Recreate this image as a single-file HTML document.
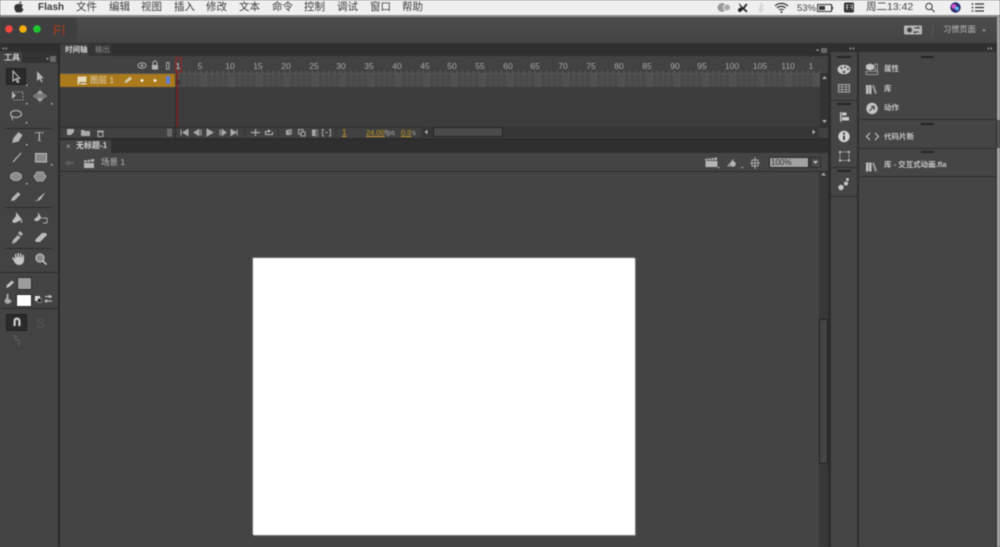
<!DOCTYPE html>
<html lang="zh"><head><meta charset="utf-8"><title>Flash</title>
<style>
html,body{margin:0;padding:0;width:1000px;height:547px;overflow:hidden;background:#454545}
body{position:relative;font-family:"Liberation Sans","Noto Sans CJK SC",sans-serif;filter:blur(.45px)}
.b{position:absolute}
.t{position:absolute;white-space:nowrap;line-height:1}
.m{top:2px;font-size:10.5px;color:#3c3c3c;line-height:11px}
.n{top:62px;font-size:8.5px;color:#a8a8a8;transform:translateX(-50%)}
svg{position:absolute;left:0;top:0}
</style></head><body>
<!-- menu bar -->
<div class="b" style="left:0;top:0;width:1000px;height:15px;background:#efefef"></div>
<div class="b" style="left:0;top:15px;width:1000px;height:2px;background:#8e8e8e"></div>
<div class="t m" style="left:38px;font-weight:700;color:#3a3a3a;font-size:10px">Flash</div>
<div class="t m" style="left:76px">文件</div><div class="t m" style="left:109px">编辑</div><div class="t m" style="left:141px">视图</div><div class="t m" style="left:174px">插入</div><div class="t m" style="left:206px">修改</div><div class="t m" style="left:239px">文本</div><div class="t m" style="left:272px">命令</div><div class="t m" style="left:304px">控制</div><div class="t m" style="left:337px">调试</div><div class="t m" style="left:370px">窗口</div><div class="t m" style="left:402px">帮助</div>
<div class="t m" style="left:797px;font-size:9.5px;top:3px;color:#444">53%</div>
<div class="t m" style="left:866px;color:#444">周二13:42</div>
<!-- title bar -->
<div class="b" style="left:0;top:17px;width:997px;height:26px;background:linear-gradient(#4c4c4c,#444);border-radius:3px 3px 0 0"></div>
<div class="b" style="left:0;top:18px;width:77px;height:25px;background:#3f3f3f"></div>
<div class="t" style="left:53px;top:23px;font-size:14px;color:#a53c1a;letter-spacing:.5px">Fl</div>
<div class="t" style="left:943px;top:26px;font-size:8.2px;color:#bdbdbd">习惯页面</div>
<!-- dark separators -->
<div class="b" style="left:0;top:43px;width:1000px;height:13px;background:#2f2f2f"></div>
<div class="b" style="left:58px;top:43px;width:2px;height:504px;background:#2a2a2a"></div>
<!-- tools panel -->
<div class="b" style="left:0;top:52px;width:58px;height:495px;background:#434343"></div>
<div class="b" style="left:0;top:52px;width:58px;height:11px;background:#333"></div>
<div class="b" style="left:0;top:52px;width:22px;height:11px;background:#434343"></div>
<div class="t" style="left:4px;top:54px;font-size:8px;font-weight:700;color:#d0d0d0">工具</div>
<div class="b" style="left:6px;top:68px;width:20px;height:17px;background:#2b2b2b;border:1px solid #202020;box-sizing:border-box"></div>
<div class="b" style="left:6px;top:314px;width:21px;height:17px;background:#2b2b2b;border:1px solid #202020;box-sizing:border-box"></div>
<div class="b" style="left:5px;top:128px;width:47px;height:1px;background:#2b2b2b"></div>
<div class="b" style="left:5px;top:207px;width:47px;height:1px;background:#2b2b2b"></div>
<div class="b" style="left:5px;top:248px;width:47px;height:1px;background:#2b2b2b"></div>
<div class="b" style="left:0;top:272px;width:58px;height:1px;background:#2b2b2b"></div>
<div class="b" style="left:0;top:308px;width:58px;height:1px;background:#2b2b2b"></div>
<div class="b" style="left:17px;top:277px;width:13px;height:11px;background:#9d9d9d;border:1px solid #2a2a2a"></div>
<div class="b" style="left:16px;top:294px;width:14px;height:11px;background:#fff;border:1px solid #2a2a2a"></div>
<div class="t" style="left:36px;top:316px;font-size:14px;color:#555">S</div>
<div class="t" style="left:33px;top:131px;font-family:'Liberation Serif',serif;font-size:14px;color:#b5b5b5;margin-left:2px">T</div>
<!-- timeline -->
<div class="b" style="left:60px;top:44px;width:28px;height:12px;background:#414141"></div>
<div class="b" style="left:88px;top:44px;width:24px;height:12px;background:#353535"></div>
<div class="t" style="left:65px;top:46px;font-size:7.5px;font-weight:700;color:#d4d4d4">时间轴</div>
<div class="t" style="left:95px;top:46px;font-size:7.5px;color:#8f8f8f">输出</div>
<div class="b" style="left:60px;top:56px;width:770px;height:71px;background:#3c3c3c"></div>
<div class="b" style="left:60px;top:56px;width:770px;height:18px;background:#424242"></div>
<div class="b" style="left:60px;top:127px;width:770px;height:11px;background:#414141;border-top:1px solid #2e2e2e;box-sizing:border-box"></div>
<div class="b" style="left:60px;top:138px;width:770px;height:2px;background:#2c2c2c"></div>
<div class="b" style="left:60px;top:74px;width:116px;height:13px;background:#aa7a1d"></div>
<div class="b" style="left:176px;top:74px;width:644px;height:13px;background:#4a4a4a"></div>
<div class="t" style="left:90px;top:76px;font-size:8.5px;color:#e0d3b4">图层 1</div>
<div class="b" style="left:166px;top:76px;width:4px;height:8px;background:#5b7fd9"></div>
<div class="t n" style="left:178px;color:#ddd">1</div>
<div class="t n" style="left:200px">5</div><div class="t n" style="left:230px">10</div><div class="t n" style="left:258px">15</div><div class="t n" style="left:286px">20</div><div class="t n" style="left:314px">25</div><div class="t n" style="left:341px">30</div><div class="t n" style="left:369px">35</div><div class="t n" style="left:397px">40</div><div class="t n" style="left:425px">45</div><div class="t n" style="left:452px">50</div><div class="t n" style="left:480px">55</div><div class="t n" style="left:508px">60</div><div class="t n" style="left:535px">65</div><div class="t n" style="left:563px">70</div><div class="t n" style="left:591px">75</div><div class="t n" style="left:619px">80</div><div class="t n" style="left:647px">85</div><div class="t n" style="left:675px">90</div><div class="t n" style="left:702px">95</div><div class="t n" style="left:732px">100</div><div class="t n" style="left:760px">105</div><div class="t n" style="left:788px">110</div><div class="t n" style="left:811px">1</div>
<div class="b" style="left:820px;top:73px;width:10px;height:54px;background:#333"></div>
<div class="b" style="left:421px;top:127px;width:398px;height:10px;background:#363636"></div>
<div class="b" style="left:433px;top:127px;width:70px;height:10px;background:#4a4a4a;border:1px solid #262626;box-sizing:border-box"></div>
<div class="t" style="left:342px;top:129px;font-size:8px;color:#c99a24;text-decoration:underline">1</div>
<div class="t" style="left:366px;top:129px;font-size:7.5px;color:#c99a24;text-decoration:underline">24.00</div>
<div class="t" style="left:385px;top:129px;font-size:7.5px;color:#aaa">fps</div>
<div class="t" style="left:401px;top:129px;font-size:7.5px;color:#c99a24;text-decoration:underline">0.0</div>
<div class="t" style="left:412px;top:129px;font-size:7.5px;color:#aaa">s</div>
<!-- document tab -->
<div class="b" style="left:60px;top:140px;width:770px;height:13px;background:#2f2f2f"></div>
<div class="b" style="left:60px;top:140px;width:51px;height:13px;background:#444"></div>
<div class="t" style="left:66px;top:143px;font-size:8px;color:#b5b5b5">×</div>
<div class="t" style="left:76px;top:142px;font-size:8px;color:#d7d7d7;font-weight:700">无标题-1</div>
<div class="b" style="left:60px;top:153px;width:770px;height:19px;background:#444;border-bottom:1px solid #2c2c2c;box-sizing:border-box"></div>
<div class="t" style="left:101px;top:158px;font-size:8.5px;color:#b5b5b5">场景 1</div>
<div class="b" style="left:769px;top:157px;width:40px;height:11px;background:#a2a2a2;border:1px solid #262626;box-sizing:border-box"></div>
<div class="t" style="left:771px;top:159px;font-size:8px;color:#333">100%</div>
<div class="b" style="left:810px;top:157px;width:11px;height:11px;background:#4a4a4a;border:1px solid #2a2a2a;box-sizing:border-box"></div>
<!-- stage -->
<div class="b" style="left:60px;top:172px;width:759px;height:375px;background:#444"></div>
<div class="b" style="left:253px;top:258px;width:382px;height:277px;background:#fff;box-shadow:1px 1px 0 #777,-1px -1px 0 #666"></div>
<div class="b" style="left:819px;top:172px;width:9px;height:375px;background:#383838"></div>
<div class="b" style="left:819px;top:319px;width:9px;height:145px;background:#444;border:1px solid #222;box-sizing:border-box"></div>
<div class="b" style="left:828px;top:56px;width:3px;height:491px;background:#2c2c2c"></div>
<!-- dock -->
<div class="b" style="left:831px;top:52px;width:26px;height:495px;background:#454545"></div>
<div class="b" style="left:857px;top:43px;width:2px;height:504px;background:#2e2e2e"></div>
<div class="b" style="left:831px;top:100px;width:26px;height:1px;background:#2b2b2b"></div>
<div class="b" style="left:831px;top:167px;width:26px;height:1px;background:#2b2b2b"></div>
<div class="b" style="left:831px;top:196px;width:26px;height:1px;background:#2b2b2b"></div>
<div class="b" style="left:859px;top:52px;width:137px;height:495px;background:#454545"></div>
<div class="b" style="left:859px;top:119px;width:137px;height:1px;background:#2b2b2b"></div>
<div class="b" style="left:859px;top:148px;width:137px;height:1px;background:#2b2b2b"></div>
<div class="b" style="left:859px;top:176px;width:137px;height:1px;background:#2b2b2b"></div>
<div class="b" style="left:996px;top:43px;width:1px;height:504px;background:#2e2e2e"></div>
<div class="b" style="left:997px;top:17px;width:3px;height:530px;background:#a5a5a5"></div>
<div class="b" style="left:997px;top:120px;width:3px;height:28px;background:#555"></div>
<div class="t" style="left:884px;top:65px;font-size:7.5px;font-weight:700;color:#c5c5c5">属性</div>
<div class="t" style="left:884px;top:85px;font-size:7.5px;font-weight:700;color:#c5c5c5">库</div>
<div class="t" style="left:884px;top:104px;font-size:7.5px;font-weight:700;color:#c5c5c5">动作</div>
<div class="t" style="left:884px;top:133px;font-size:7.5px;font-weight:700;color:#c5c5c5">代码片断</div>
<div class="t" style="left:884px;top:161px;font-size:7.5px;font-weight:700;color:#c5c5c5">库 - 交互式动画.fla</div>
<svg width="1000" height="547" viewBox="0 0 1000 547">
<defs>
<pattern id="tk" x="178" y="71" width="5.57" height="3" patternUnits="userSpaceOnUse"><rect width="1" height="2" fill="#686868"/></pattern>
<pattern id="cl" x="178" y="74" width="27.85" height="13" patternUnits="userSpaceOnUse"><rect width="27.85" height="13" fill="#4a4a4a"/><rect x="22" width="5.85" height="13" fill="#505050"/><rect x="5.570" width="1" height="13" fill="#515151"/><rect x="11.140" width="1" height="13" fill="#515151"/><rect x="16.710" width="1" height="13" fill="#515151"/><rect width="1" height="13" fill="#555"/></pattern>
</defs>
<!-- apple -->
<path d="M19.300 4.300c1.500-.7 2.700-.3 3.700.8-1.600 1-1.500 3.400.5 4.200-.6 1.500-1.700 3.200-2.800 3.200-.7 0-1-.4-1.700-.4s-1.100.4-1.800.4c-1.300 0-2.900-2.700-2.900-5 0-2.800 2.900-4 5-3.200zM19.200 3.900c-.1-1.300.9-2.500 2.100-2.700.1 1.400-.9 2.600-2.100 2.700z" fill="#333"/>
<!-- traffic lights -->
<circle cx="9" cy="29" r="3.800" fill="#f4443d"/><circle cx="23" cy="29" r="3.800" fill="#f5ae10"/><circle cx="37" cy="29" r="3.800" fill="#1fc72e"/>
<!-- status icons -->
<circle cx="722" cy="7.500" r="4.500" fill="#999"/><circle cx="727" cy="7.500" r="3.500" fill="#aaa" stroke="#eee"/>
<path d="M739 3l4 4.500 3-4 1.500 1-3 4 3 2.500-1 1.500-3.500-3-2.500 2.500c-1.500.5-2.500-.5-2.500-2s1.500-2.500 3-2l-2-4z" fill="#222"/>
<path d="M761 3v9l-2.500-2.500m0-4l5 4-2.500 2.500m0-9l2.500 2.500-5 4" stroke="#ccc" fill="none" stroke-width=".8"/>
<path d="M775 6c3.500-3.500 9-3.500 13 0M777 8c2.500-2.300 6-2.300 8.500 0M779 10c1.300-1 3.200-1 4.500 0" stroke="#333" fill="none" stroke-width="1.200"/><circle cx="781.500" cy="12" r="1" fill="#333"/>
<rect x="817.500" y="4.500" width="14" height="7" fill="none" stroke="#333"/><rect x="819" y="6" width="6" height="4" fill="#333"/><rect x="832" y="6.500" width="1" height="3" fill="#333"/>
<rect x="844" y="2.500" width="10" height="10" rx="1.500" fill="#333"/><path d="M846 5h2.500M846 7.500h2.500M847 5v5M850 5h2.500v5M850 7.500h2.500" stroke="#ddd" stroke-width=".7" fill="none"/>
<circle cx="929" cy="6.500" r="3.200" fill="none" stroke="#444" stroke-width="1.100"/><path d="M931.500 9l3 3" stroke="#444" stroke-width="1.200"/>
<circle cx="955.500" cy="7.500" r="5.200" fill="#2b2a6e"/><circle cx="954" cy="6.500" r="2.500" fill="#d454c8"/><circle cx="957" cy="8.500" r="2" fill="#58b5f0"/>
<path d="M975 4h9M975 7.500h9M975 11h9" stroke="#333" stroke-width="1.300"/><circle cx="972.500" cy="4" r=".9" fill="#333"/><circle cx="972.500" cy="7.500" r=".9" fill="#333"/><circle cx="972.500" cy="11" r=".9" fill="#333"/>
<!-- workspace icon -->
<rect x="904" y="25.500" width="18" height="9" rx="1.500" fill="#b8b8b8"/><circle cx="909.500" cy="30" r="2.500" fill="#444"/><path d="M914 28h5l-1.500-1.500M919 32h-5l1.500 1.500" stroke="#444" fill="none"/>
<rect x="932" y="25" width="1" height="12" fill="#555"/><path d="M982 29.500h4l-2 2z" fill="#aaa"/>
<!-- collapse arrows -->
<path d="M4 47l-2 1.500 2 1.500zM7 47l-2 1.500 2 1.500zM851 47l-2 1.500 2 1.500zM854 47l-2 1.500 2 1.500zM989 47l-2 1.500 2 1.500zM992 47l-2 1.500 2 1.500z" fill="#999"/>
<path d="M46 58h3l-1.500 1.800zM816 49.500h3l-1.500 1.800z" fill="#bbb"/><path d="M50 56h6v6h-6zM821 48h6v5h-6z" fill="#6a6a6a"/>
<!-- grippers -->
<path d="M837 57h14M921 57h13M837 104h14M921 124h13M921 152h13M837 171h14" stroke="#242424" stroke-width="2"/>
<!-- tools icons -->
<path d="M13 71v10l2.500-2 2 3.500 1.300-.8-2-3.300h3z" fill="none" stroke="#c8c8c8"/>
<path d="M37 71v10l2.500-2 2 3.500 1.300-.8-2-3.300h3z" fill="#b5b5b5"/>
<path d="M12 92v7l4-3.500z" fill="#bbb"/><path d="M12 92h11v8h-11" fill="none" stroke="#aaa" stroke-dasharray="1.500 1.500"/>
<path d="M40 90l6 6-6 6-6-6z" fill="#aaa"/><ellipse cx="40" cy="96" rx="7" ry="2.500" fill="#777"/>
<ellipse cx="16" cy="114" rx="5.500" ry="3.500" fill="none" stroke="#aaa" stroke-width="1.300"/><path d="M12 116c-1 2 .5 3 1 4.500" stroke="#aaa" fill="none"/>
<path d="M12 143l1.500-5 5-6 4 3-4 6.500z" fill="#b5b5b5"/>
<path d="M13 162l8-9" stroke="#bbb" stroke-width="1.200"/>
<rect x="35.500" y="153.500" width="11" height="8.500" fill="#888" stroke="#c0c0c0"/>
<ellipse cx="16" cy="176.500" rx="5.500" ry="4" fill="#8b8b8b" stroke="#aaa"/>
<path d="M37 172h6l3 4.500-3 4.500h-6l-3-4.500z" fill="#8b8b8b" stroke="#aaa"/>
<path d="M11 201l1-3 6-6 2.500 2.500-6 6z" fill="#b5b5b5"/>
<path d="M34 201c3 0 4-1.500 4.500-3l7-6-4.500 7c-2 2-4.500 2.500-7 2z" fill="#bbb"/>
<path d="M16 212v4l-3.500 4.500c-1 2 2 3 3.500 2 2-1 4-2 6-3z" fill="#c0c0c0"/><path d="M21.500 219l1 3.500h-2z" fill="#bbb"/>
<path d="M38 212v4l-3.500 3c-1 2 2 2.500 3.500 2l3.500-3z" fill="#bbb"/><path d="M42 218h5v5h-4" fill="none" stroke="#aaa"/>
<path d="M12 244l1-4 5-5 2.500 2.500-5 5zM18 233l2-2 3 3-2 2z" fill="#b5b5b5"/>
<path d="M35 240l7-7h4l1 2-7 7h-4z" fill="#bbb"/>
<path d="M14 260l-2-3 1-1 2 2v-5h1.500v3h1v-4h1.500v4h1v-3.500h1.500v3.500h1v-2h1.500v5c0 3-2 5-5 5-2 0-3-1-4.500-2.500z" fill="#c4c4c4" transform="translate(0,1)"/>
<circle cx="40" cy="258" r="4" fill="#888" stroke="#bbb" stroke-width="1.300"/><path d="M43 261l3.500 3.500" stroke="#bbb" stroke-width="1.800"/>
<path d="M6 288l1-3 5-4.500 2 2-5 4.500z" fill="#c5c5c5"/>
<path d="M7 297l-2.500 3.500c0 2 2 3.500 3.500 3.500l4-2.500z" fill="#aaa"/><rect x="6.500" y="294" width="2" height="4" fill="#aaa"/>
<rect x="35" y="296" width="5" height="5" fill="#ddd"/><rect x="37.500" y="298.500" width="4" height="4" fill="#222" stroke="#ccc" stroke-width=".5"/>
<path d="M45 296.500h7M49 295l2 1.500-2 1.500M52 301h-7M47 299.500l-2 1.500 2 1.500" stroke="#ccc" fill="none"/>
<path d="M13.500 326v-5a3.500 3.500 0 017 0v5h-2.200v-5a1.300 1.300 0 00-2.600 0v5z" fill="#d0d0d0"/>
<path d="M13 336h3v4h3v6" stroke="#5c5c5c" fill="none" stroke-width="1.200"/>
<path d="M26 84.500h1.500v1.500h-1.500zM26 103h1.500v1.500h-1.500zM51 103h1.500v1.500h-1.500zM26 122h1.500v1.500h-1.500zM26 144h1.500v1.500h-1.500zM51 164h1.500v1.500h-1.500zM26 183h1.500v1.500h-1.500z" fill="#bbb"/>
<!-- timeline header icons -->
<ellipse cx="142" cy="65.500" rx="4" ry="2.700" fill="none" stroke="#aaa" stroke-width="1.100"/><circle cx="142" cy="65.500" r="1.300" fill="#aaa"/>
<rect x="152" y="65" width="6" height="4.500" fill="#b5b5b5"/><path d="M153 65v-2a2 2 0 014 0v2" fill="none" stroke="#b5b5b5"/>
<rect x="166.500" y="62.500" width="2.500" height="6.500" fill="none" stroke="#a5a5a5"/>
<rect x="178" y="71" width="642" height="2" fill="url(#tk)"/>
<rect x="60" y="73" width="760" height="1" fill="#555"/>
<rect x="178" y="74" width="642" height="13" fill="url(#cl)"/>
<rect x="77.500" y="76.500" width="9" height="8" fill="#e6d9bd"/><path d="M80 84.500v-2h6.500" stroke="#8c6a25" fill="none"/>
<path d="M124 83l2-3 4-3.500 2 2-4 3.500z" fill="#d8cdb0"/>
<circle cx="142" cy="80.500" r="1.400" fill="#fff"/><circle cx="155" cy="80.500" r="1.400" fill="#fff"/>
<circle cx="178" cy="82" r="1.700" fill="none" stroke="#222"/>
<rect x="176" y="58" width="5" height="14" fill="none" stroke="#a92020"/>
<rect x="176.500" y="72" width="1.500" height="55" fill="#7c1f1f"/>
<rect x="175" y="74" width="1" height="64" fill="#2a2a2a" opacity=".7"/>
<!-- timeline scroll arrows -->
<path d="M822 79h5l-2.500-3zM822 120h5l-2.500 3zM424.500 132l3-2.500v5zM815.500 132l-3-2.500v5zM821 175.500h5l-2.500-3z" fill="#a9a9a9"/>
<!-- bottom controls -->
<path d="M67 129h7v6h-7z" fill="#b0b0b0"/><path d="M71 135h3v-3z" fill="#414141"/>
<path d="M81 130h3l1 1h5v5h-9z" fill="#aaa"/>
<path d="M97 131h7M98 132h5v4.500h-5z" stroke="#aaa" fill="none"/>
<rect x="167.500" y="129" width="4" height="7" fill="#666" stroke="#888" stroke-width=".5"/>
<path d="M181 129.500v6M188 129.500v6l-5-3zM199 129.500v6l-5-3zM201 129.500v6M207 129l6 3.500-6 3.500zM220 129.500v6M222 129.500v6l4-3zM231 129.500v6l5-3zM237 129.500v6" stroke="#a9a9a9" fill="#a9a9a9"/>
<path d="M174 128v9M245 128v9M278 128v9M336 128v9" stroke="#333"/>
<path d="M251 132.500h9M255.500 129v7" stroke="#aaa" stroke-width="1.300"/>
<path d="M265 131h3v-2l3 2-3 2v-1h-2v2h6v-2h1v3h-8z" fill="#b5b5b5"/>
<rect x="286" y="130" width="5" height="5" fill="#aaa"/><rect x="288" y="129" width="4" height="5" fill="#888"/>
<rect x="298.500" y="129.500" width="4.500" height="4.500" fill="none" stroke="#aaa"/><rect x="301" y="132" width="4" height="4" fill="#414141" stroke="#aaa"/>
<rect x="312" y="129.500" width="3" height="6.500" fill="#aaa"/><rect x="315.500" y="130" width="2" height="6" fill="none" stroke="#888"/>
<path d="M324 129.500h-1.500v6.500h1.500M329 129.500h1.500v6.500h-1.500M325.500 132.500h2" stroke="#aaa" fill="none"/>
<!-- edit bar icons -->
<path d="M65 163l4-3v2h5v2h-5v2z" fill="#5e5e5e"/>
<rect x="84" y="163" width="10" height="5" fill="#b5b5b5"/><path d="M84 160.500l10-1.500.3 2.500-10 1z" fill="#b5b5b5"/><path d="M87 160l.5 2.500M90 159.500l.5 2.500" stroke="#444" stroke-width=".8"/>
<rect x="705.500" y="161" width="12" height="6" fill="#b5b5b5"/><path d="M705 159l12-1.500v2.500l-12 .5z" fill="#bbb"/><path d="M708 158.500v2M711 158v2M714 158v2" stroke="#444" stroke-width=".8"/>
<path d="M717.500 167h2.500l-1.200 1.500zM741 167h2.500l-1.200 1.500z" fill="#bbb"/>
<path d="M728 166l5-6v6z" fill="none" stroke="#a5a5a5"/><circle cx="733" cy="164" r="2.800" fill="#b5b5b5"/>
<rect x="752" y="160" width="6" height="6" fill="none" stroke="#aaa"/><path d="M755 157v12M750 163h10" stroke="#aaa"/>
<path d="M813 161h5l-2.500 3z" fill="#c5c5c5"/>
<!-- dock icons -->
<ellipse cx="844" cy="69.500" rx="6.500" ry="4.700" fill="#c8c8c8"/><circle cx="841.500" cy="68" r="1" fill="#444"/><circle cx="845" cy="67" r="1" fill="#444"/><circle cx="848" cy="69" r="1" fill="#444"/><circle cx="844" cy="72" r="1.200" fill="#444"/>
<rect x="838.500" y="84.500" width="11" height="7.500" fill="none" stroke="#aaa"/><path d="M838 87h12M838 89.500h12M842 84v8M846 84v8" stroke="#aaa" stroke-width=".8"/>
<rect x="840" y="112" width="1.500" height="10" fill="#bbb"/><rect x="842" y="112.500" width="4.500" height="3" fill="#ccc"/><rect x="842" y="117" width="7" height="3.500" fill="#ccc"/>
<circle cx="844" cy="136.500" r="5.700" fill="#d2d2d2"/><rect x="843" y="135.500" width="2" height="4.500" fill="#444"/><rect x="843" y="132.500" width="2" height="2" fill="#444"/>
<rect x="840" y="152" width="9" height="8.500" fill="none" stroke="#b0b0b0" stroke-dasharray="1.500 .7"/><path d="M839 151h2v2h-2zM848 151h2v2h-2zM839 159.500h2v2h-2zM848 159.500h2v2h-2z" fill="#bbb"/>
<circle cx="841" cy="187.500" r="2.700" fill="#c8c8c8"/><circle cx="846" cy="183.500" r="2" fill="#c8c8c8"/><circle cx="847.500" cy="179.500" r="1.500" fill="#c8c8c8"/>
<!-- panel icons -->
<path d="M866 65l4-1.500 4 1.500v4l-4 1.500-4-1.500z" fill="#c5c5c5"/><rect x="875" y="64" width="2.500" height="6" fill="none" stroke="#aaa" stroke-width=".8"/><rect x="866" y="71.500" width="12" height="3" fill="none" stroke="#aaa" stroke-width=".8"/>
<path d="M866 85h2.500v9h-2.500zM869 85h2.500v9h-2.500z" fill="#c0c0c0"/><path d="M872 85.500l2-.5 3 8.500-2 .5z" fill="#999"/>
<path d="M866 162.500h2.500v9h-2.500zM869 162.500h2.500v9h-2.500z" fill="#c0c0c0"/><path d="M872 163l2-.5 3 8.500-2 .5z" fill="#999"/>
<circle cx="872" cy="108.500" r="5.700" fill="#c5c5c5"/><path d="M869.500 111l4.500-4.500M871 106.500h3.200v3.200" stroke="#444" fill="none" stroke-width="1.200"/>
<path d="M870 133l-3.500 3.500 3.500 3.500M875 133l3.500 3.500-3.500 3.500" stroke="#c5c5c5" fill="none" stroke-width="1.100"/>
</svg>
</body></html>
